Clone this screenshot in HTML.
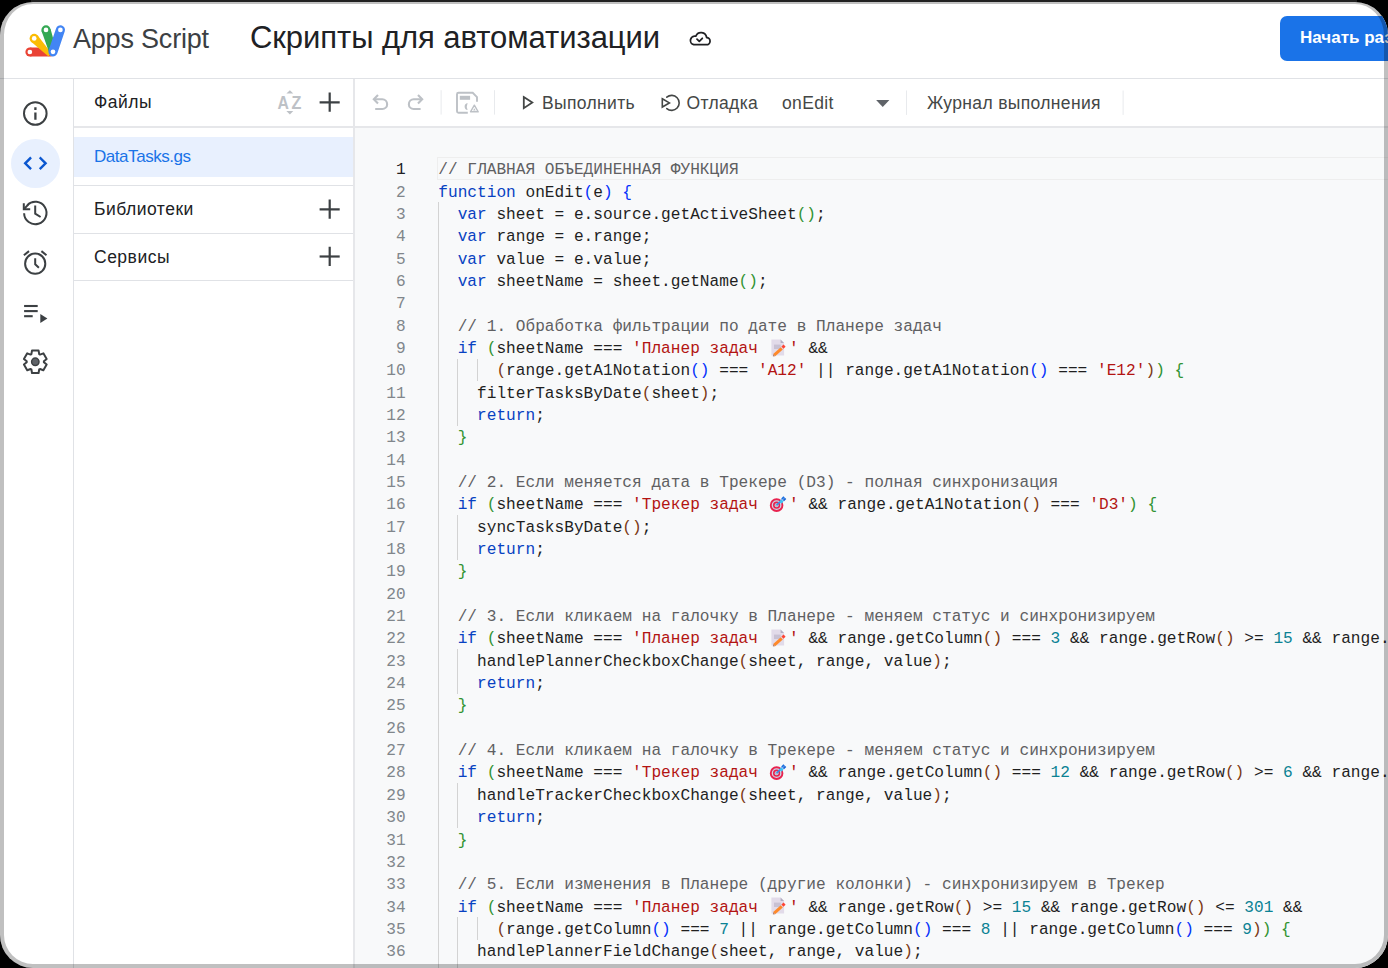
<!DOCTYPE html>
<html><head><meta charset="utf-8">
<style>
*{box-sizing:border-box;margin:0;padding:0}
html,body{width:1388px;height:968px;overflow:hidden;background:#000}
body{position:relative;font-family:"Liberation Sans",sans-serif;color:#202124}
#strip{position:absolute;left:31px;right:31px;top:0;height:2px;background:#212121}
#app{position:absolute;left:0;top:2px;width:1388px;height:966px;border-radius:33px;overflow:hidden;background:#fff}
#frame{position:absolute;left:0;top:2px;width:1388px;height:966px;border-radius:33px;border:4px solid rgba(0,0,0,0.247);border-top-width:2px;pointer-events:none}
.abs{position:absolute;white-space:nowrap}
.hl{position:absolute;height:1px;background:#e0e2e6}
.vl{position:absolute;width:1px;background:#e0e2e6}
#pg{position:absolute;left:0;top:-2px;width:1388px;height:968px}
#icons{position:absolute;left:0;top:0;width:1388px;height:968px}
#apps{left:73px;top:22.8px;font-size:27px;line-height:32px;color:#3c4043;letter-spacing:-0.2px}
#title{left:250px;top:19.6px;font-size:31px;line-height:36px;color:#202124;letter-spacing:-0.05px}
#btn{left:1280px;top:16.4px;width:140px;height:44.5px;border-radius:7px;background:#1a73e8;color:#fff;font-weight:bold;font-size:17px;line-height:20px;padding:11.7px 0 0 20px}
#navsel{left:11px;top:139px;width:49px;height:49px;border-radius:50%;background:#e8f0fe}
.pt{position:absolute;left:94px;font-size:17.5px;line-height:20px;color:#202124;letter-spacing:0.5px;white-space:nowrap}
#filesel{left:74px;top:137px;width:279px;height:40px;background:#e8f0fe}
#fname{left:94px;top:146.6px;font-size:17px;line-height:20px;color:#1a73e8;letter-spacing:-0.45px}
.tb{position:absolute;top:92.7px;font-size:17.5px;line-height:20px;color:#444746;letter-spacing:0.35px;white-space:nowrap}
#editor{position:absolute;left:355px;top:128px;width:1034px;height:845px;background:#f8f9fa}
#curline{position:absolute;left:437px;top:157px;width:960px;height:23px;border:1px solid #eeeeee;border-right:none}
.ig{position:absolute;width:1px;background:#d3d3d3}
#nums{position:absolute;left:354px;top:159.2px;width:51.7px;text-align:right;font-family:"Liberation Mono",monospace;font-size:16.13px;line-height:22.35px;color:#80868b;white-space:pre}
#nums .act{color:#202124}
#code{position:absolute;left:438.3px;top:159.2px;width:1000px;font-family:"Liberation Mono",monospace;font-size:16.158px;line-height:22.35px;color:#1f1f1f;white-space:pre}
#code .l{height:22.35px}
.emo{display:inline-block;width:21.4px;height:18px;vertical-align:-3.6px}
.emo svg{display:block}
.kw{color:#0842c2}
.cm{color:#5f6062}
.st{color:#b31412}
.nu{color:#0b8294}
.b1{color:#0431fa}
.b2{color:#319331}
.b3{color:#7b3814}
</style></head><body>
<div id="strip"></div>
<div id="app"><div id="pg">
  <div class="abs" id="apps">Apps Script</div>
  <div class="abs" id="title">Скрипты для автоматизации</div>
  <div class="abs" id="btn">Начать развертывание</div>
  <div class="hl" style="left:0;top:78px;width:1388px"></div>
  <div class="vl" style="left:73px;top:79px;height:900px"></div>
  <div class="abs" id="navsel"></div>
  <div class="vl" style="left:353px;top:79px;height:900px;width:2px;background:#e6e7ea"></div>
  <div class="pt" style="top:92.4px">Файлы</div>
  <div class="hl" style="left:74px;top:126px;width:1314px;height:2px;background:#e6e7ea"></div>
  <div class="abs" id="filesel"></div>
  <div class="abs" id="fname">DataTasks.gs</div>
  <div class="hl" style="left:74px;top:185px;width:279px"></div>
  <div class="pt" style="top:198.9px">Библиотеки</div>
  <div class="hl" style="left:74px;top:233px;width:279px"></div>
  <div class="pt" style="top:246.5px">Сервисы</div>
  <div class="hl" style="left:74px;top:280px;width:279px"></div>
  <div class="tb" style="left:542px">Выполнить</div>
  <div class="tb" style="left:686.5px">Отладка</div>
  <div class="tb" style="left:782px">onEdit</div>
  <div class="tb" style="left:927px">Журнал выполнения</div>
  <div id="editor"></div>
  <div id="curline"></div>
  <div id="guides"><div class="ig" style="left:438px;top:202.20px;height:782.25px"></div><div class="ig" style="left:457px;top:358.65px;height:67.05px"></div><div class="ig" style="left:457px;top:515.10px;height:44.70px"></div><div class="ig" style="left:457px;top:649.20px;height:44.70px"></div><div class="ig" style="left:457px;top:783.30px;height:44.70px"></div><div class="ig" style="left:457px;top:917.40px;height:67.05px"></div><div class="ig" style="left:477px;top:358.65px;height:22.35px"></div><div class="ig" style="left:477px;top:917.40px;height:22.35px"></div></div><!--/guides-->
  <div id="nums"><div class="l act">1</div><div class="l">2</div><div class="l">3</div><div class="l">4</div><div class="l">5</div><div class="l">6</div><div class="l">7</div><div class="l">8</div><div class="l">9</div><div class="l">10</div><div class="l">11</div><div class="l">12</div><div class="l">13</div><div class="l">14</div><div class="l">15</div><div class="l">16</div><div class="l">17</div><div class="l">18</div><div class="l">19</div><div class="l">20</div><div class="l">21</div><div class="l">22</div><div class="l">23</div><div class="l">24</div><div class="l">25</div><div class="l">26</div><div class="l">27</div><div class="l">28</div><div class="l">29</div><div class="l">30</div><div class="l">31</div><div class="l">32</div><div class="l">33</div><div class="l">34</div><div class="l">35</div><div class="l">36</div><div class="l">37</div></div><!--/nums-->
  <div id="code"><div class="l"><span class="cm">// ГЛАВНАЯ ОБЪЕДИНЕННАЯ ФУНКЦИЯ</span></div><div class="l"><span class="kw">function</span> onEdit<span class="b1">(</span>e<span class="b1">)</span> <span class="b1">{</span></div><div class="l">  <span class="kw">var</span> sheet = e.source.getActiveSheet<span class="b2">()</span>;</div><div class="l">  <span class="kw">var</span> range = e.range;</div><div class="l">  <span class="kw">var</span> value = e.value;</div><div class="l">  <span class="kw">var</span> sheetName = sheet.getName<span class="b2">()</span>;</div><div class="l"></div><div class="l">  <span class="cm">// 1. Обработка фильтрации по дате в Планере задач</span></div><div class="l">  <span class="kw">if</span> <span class="b2">(</span>sheetName === <span class="st">'Планер задач </span><span class="emo"><svg width="21.4" height="18" viewBox="0 0 21.4 18"><path d="M3.4 0.6H12.6L16.1 4.1V16.4H3.4Z" fill="#e2dbe9"/><path d="M12.6 0.6L16.1 4.1H12.6Z" fill="#b3adbf"/><rect x="6" y="5.6" width="6.7" height="4.4" fill="#c8c1d3"/><path d="M5.2 15.08L12.8 8.28L14.8 10.52L7.2 17.32Z" fill="#ff8a2a"/><path d="M5.2 15.08L7.2 17.32L4.9 17.6Z" fill="#b9826c"/><path d="M13.4 7.48L15.6 5.48L17.6 7.72L15.4 9.72Z" fill="#ff4433"/></svg></span><span class="st">'</span> &amp;&amp;</div><div class="l">      <span class="b3">(</span>range.getA1Notation<span class="b1">()</span> === <span class="st">'A12'</span> || range.getA1Notation<span class="b1">()</span> === <span class="st">'E12'</span><span class="b3">)</span><span class="b2">)</span> <span class="b2">{</span></div><div class="l">    filterTasksByDate<span class="b3">(</span>sheet<span class="b3">)</span>;</div><div class="l">    <span class="kw">return</span>;</div><div class="l">  <span class="b2">}</span></div><div class="l"></div><div class="l">  <span class="cm">// 2. Если меняется дата в Трекере (D3) - полная синхронизация</span></div><div class="l">  <span class="kw">if</span> <span class="b2">(</span>sheetName === <span class="st">'Трекер задач </span><span class="emo"><svg width="21.4" height="18" viewBox="0 0 21.4 18"><circle cx="8.6" cy="10.15" r="5.85" fill="#cdd5e6" stroke="#e8234f" stroke-width="1.9"/><circle cx="8.6" cy="10.15" r="2.8" fill="#c9d3e3" stroke="#e8234f" stroke-width="1.6"/><circle cx="8.6" cy="10.15" r="1.6" fill="#b3bfcf"/><path d="M8.6 10.15L14 4.7" stroke="#3a8fe8" stroke-width="1.6"/><path d="M11.2 6.6L13.4 4.4L15.6 6.6L13.4 8.8Z" fill="#40c4f5"/><path d="M13.2 3.4L15.4 1.2L16.8 2.6L14.6 4.8Z" fill="#1a6fe0"/><path d="M14.7 4.9L16.9 2.7L18.3 4.1L16.1 6.3Z" fill="#1565d8"/></svg></span><span class="st">'</span> &amp;&amp; range.getA1Notation<span class="b3">()</span> === <span class="st">'D3'</span><span class="b2">)</span> <span class="b2">{</span></div><div class="l">    syncTasksByDate<span class="b3">()</span>;</div><div class="l">    <span class="kw">return</span>;</div><div class="l">  <span class="b2">}</span></div><div class="l"></div><div class="l">  <span class="cm">// 3. Если кликаем на галочку в Планере - меняем статус и синхронизируем</span></div><div class="l">  <span class="kw">if</span> <span class="b2">(</span>sheetName === <span class="st">'Планер задач </span><span class="emo"><svg width="21.4" height="18" viewBox="0 0 21.4 18"><path d="M3.4 0.6H12.6L16.1 4.1V16.4H3.4Z" fill="#e2dbe9"/><path d="M12.6 0.6L16.1 4.1H12.6Z" fill="#b3adbf"/><rect x="6" y="5.6" width="6.7" height="4.4" fill="#c8c1d3"/><path d="M5.2 15.08L12.8 8.28L14.8 10.52L7.2 17.32Z" fill="#ff8a2a"/><path d="M5.2 15.08L7.2 17.32L4.9 17.6Z" fill="#b9826c"/><path d="M13.4 7.48L15.6 5.48L17.6 7.72L15.4 9.72Z" fill="#ff4433"/></svg></span><span class="st">'</span> &amp;&amp; range.getColumn<span class="b3">()</span> === <span class="nu">3</span> &amp;&amp; range.getRow<span class="b3">()</span> &gt;= <span class="nu">15</span> &amp;&amp; range.</div><div class="l">    handlePlannerCheckboxChange<span class="b3">(</span>sheet, range, value<span class="b3">)</span>;</div><div class="l">    <span class="kw">return</span>;</div><div class="l">  <span class="b2">}</span></div><div class="l"></div><div class="l">  <span class="cm">// 4. Если кликаем на галочку в Трекере - меняем статус и синхронизируем</span></div><div class="l">  <span class="kw">if</span> <span class="b2">(</span>sheetName === <span class="st">'Трекер задач </span><span class="emo"><svg width="21.4" height="18" viewBox="0 0 21.4 18"><circle cx="8.6" cy="10.15" r="5.85" fill="#cdd5e6" stroke="#e8234f" stroke-width="1.9"/><circle cx="8.6" cy="10.15" r="2.8" fill="#c9d3e3" stroke="#e8234f" stroke-width="1.6"/><circle cx="8.6" cy="10.15" r="1.6" fill="#b3bfcf"/><path d="M8.6 10.15L14 4.7" stroke="#3a8fe8" stroke-width="1.6"/><path d="M11.2 6.6L13.4 4.4L15.6 6.6L13.4 8.8Z" fill="#40c4f5"/><path d="M13.2 3.4L15.4 1.2L16.8 2.6L14.6 4.8Z" fill="#1a6fe0"/><path d="M14.7 4.9L16.9 2.7L18.3 4.1L16.1 6.3Z" fill="#1565d8"/></svg></span><span class="st">'</span> &amp;&amp; range.getColumn<span class="b3">()</span> === <span class="nu">12</span> &amp;&amp; range.getRow<span class="b3">()</span> &gt;= <span class="nu">6</span> &amp;&amp; range.</div><div class="l">    handleTrackerCheckboxChange<span class="b3">(</span>sheet, range, value<span class="b3">)</span>;</div><div class="l">    <span class="kw">return</span>;</div><div class="l">  <span class="b2">}</span></div><div class="l"></div><div class="l">  <span class="cm">// 5. Если изменения в Планере (другие колонки) - синхронизируем в Трекер</span></div><div class="l">  <span class="kw">if</span> <span class="b2">(</span>sheetName === <span class="st">'Планер задач </span><span class="emo"><svg width="21.4" height="18" viewBox="0 0 21.4 18"><path d="M3.4 0.6H12.6L16.1 4.1V16.4H3.4Z" fill="#e2dbe9"/><path d="M12.6 0.6L16.1 4.1H12.6Z" fill="#b3adbf"/><rect x="6" y="5.6" width="6.7" height="4.4" fill="#c8c1d3"/><path d="M5.2 15.08L12.8 8.28L14.8 10.52L7.2 17.32Z" fill="#ff8a2a"/><path d="M5.2 15.08L7.2 17.32L4.9 17.6Z" fill="#b9826c"/><path d="M13.4 7.48L15.6 5.48L17.6 7.72L15.4 9.72Z" fill="#ff4433"/></svg></span><span class="st">'</span> &amp;&amp; range.getRow<span class="b3">()</span> &gt;= <span class="nu">15</span> &amp;&amp; range.getRow<span class="b3">()</span> &lt;= <span class="nu">301</span> &amp;&amp;</div><div class="l">      <span class="b3">(</span>range.getColumn<span class="b1">()</span> === <span class="nu">7</span> || range.getColumn<span class="b1">()</span> === <span class="nu">8</span> || range.getColumn<span class="b1">()</span> === <span class="nu">9</span><span class="b3">)</span><span class="b2">)</span> <span class="b2">{</span></div><div class="l">    handlePlannerFieldChange<span class="b3">(</span>sheet, range, value<span class="b3">)</span>;</div><div class="l">    <span class="kw">return</span>;</div></div><!--/code-->
<svg id="icons" width="1388" height="968" viewBox="0 0 1388 968">
<!-- logo -->
<g>
  <circle cx="29.85" cy="52" r="4.45" fill="#ea4335"/>
  <path d="M29.85 47.55 L38.5 47.55 L52 56.45 L29.85 56.45Z" fill="#ea4335"/>
  <circle cx="34.2" cy="38.4" r="4.6" fill="#fbbc04"/>
  <path d="M30.87 41.57 L37.53 35.23 L51 52.8 L48.5 56.4Z" fill="#fbbc04"/>
  <circle cx="46" cy="29.9" r="4.6" fill="#34a853"/>
  <path d="M41.45 30.7 L50.55 29.1 L55 45 L50.5 56.2Z" fill="#34a853"/>
  <line x1="60.4" y1="29.9" x2="53" y2="51.8" stroke="#4285f4" stroke-width="9.2" stroke-linecap="round"/>
  <circle cx="29.85" cy="52" r="2.35" fill="#fff"/>
  <circle cx="34.2" cy="38.4" r="2.35" fill="#fff"/>
  <circle cx="46" cy="29.9" r="2.35" fill="#fff"/>
  <circle cx="60.4" cy="29.9" r="2.35" fill="#fff"/>
  <circle cx="53" cy="51.8" r="2.35" fill="#fff"/>
</g>
<!-- cloud done -->
<g fill="none" stroke="#202124" stroke-width="1.8" stroke-linejoin="round" stroke-linecap="round">
  <path d="M693.8 44.7 H706.3 A3.6 3.6 0 0 0 706.6 37.5 A5.6 5.6 0 0 0 695.8 36.2 A4.3 4.3 0 0 0 693.8 44.7Z"/>
  <path d="M697 39.2 L699.3 41.3 L702.3 38.3"/>
</g>
<!-- nav icons -->
<g fill="none" stroke="#3c4043" stroke-width="2">
  <circle cx="35.3" cy="113.5" r="11.3"/>
  <line x1="35.4" y1="112.4" x2="35.4" y2="119.8" stroke-width="2.3"/>
  <line x1="35.4" y1="107.3" x2="35.4" y2="110" stroke-width="2.3"/>
</g>
<g fill="none" stroke="#0b57d0" stroke-width="2.4" stroke-linecap="square" stroke-linejoin="miter">
  <path d="M30.2 158.3 L25.2 163.3 L30.2 168.3"/>
  <path d="M40.6 158.3 L45.6 163.3 L40.6 168.3"/>
</g>
<g fill="none" stroke="#3c4043" stroke-width="2">
  <path d="M24.1 213.2 A11.2 11.2 0 1 0 27.3 205.1"/>
  <path d="M23.8 203.3 V209.3 H30.2"/>
  <path d="M24.3 208.8 L28.2 204.6"/>
  <path d="M35.2 205.6 V213.6 L40.6 217"/>
</g>
<g fill="none" stroke="#3c4043" stroke-width="2">
  <circle cx="35.2" cy="263.7" r="10.1"/>
  <line x1="23.9" y1="255.2" x2="29" y2="251.1"/>
  <line x1="41.4" y1="251.1" x2="46.5" y2="255.2"/>
  <path d="M35.2 258.3 V264.3 L38.9 267.7"/>
</g>
<g fill="none" stroke="#3c4043" stroke-width="2.1">
  <line x1="24.1" y1="306" x2="37.7" y2="306"/>
  <line x1="24.1" y1="311.1" x2="37.7" y2="311.1"/>
  <line x1="24.1" y1="316.2" x2="32.7" y2="316.2"/>
</g>
<path d="M40.3 314 L47.4 318.5 L40.3 323.1Z" fill="#3c4043"/>
<path d="M31.40 354.14 L32.00 350.58 L38.60 350.58 L39.20 354.14 L39.99 354.59 L43.37 353.33 L46.67 359.05 L43.89 361.35 L43.89 362.25 L46.67 364.55 L43.37 370.27 L39.99 369.01 L39.20 369.46 L38.60 373.02 L32.00 373.02 L31.40 369.46 L30.61 369.01 L27.23 370.27 L23.93 364.55 L26.71 362.25 L26.71 361.35 L23.93 359.05 L27.23 353.33 L30.61 354.59Z" fill="none" stroke="#3c4043" stroke-width="2" stroke-linejoin="round"/>
<circle cx="35.3" cy="361.8" r="3.7" fill="#5f6368" stroke="#3c4043" stroke-width="1.5"/>
<!-- files panel icons -->
<g fill="#bdc1c6">
  <path d="M286.4 93.6 L289.9 90.2 L293.3 93.6Z"/>
  <path d="M286.4 110.9 L289.9 114.4 L293.3 110.9Z"/>
</g>
<text x="277.6" y="108.6" font-family="Liberation Sans" font-size="17.5" font-weight="bold" fill="#bdc1c6" textLength="11.4" lengthAdjust="spacingAndGlyphs">A</text><text x="291.6" y="108.6" font-family="Liberation Sans" font-size="17.5" font-weight="bold" fill="#bdc1c6" textLength="9.9" lengthAdjust="spacingAndGlyphs">Z</text>
<g stroke="#3c4043" stroke-width="2.2">
  <line x1="319.6" y1="102.3" x2="339.7" y2="102.3"/>
  <line x1="329.7" y1="92.5" x2="329.7" y2="111.8"/>
  <line x1="319.6" y1="209.3" x2="339.7" y2="209.3"/>
  <line x1="329.7" y1="199.5" x2="329.7" y2="218.8"/>
  <line x1="319.6" y1="256.5" x2="339.7" y2="256.5"/>
  <line x1="329.7" y1="246.7" x2="329.7" y2="266"/>
</g>
<!-- toolbar -->
<g fill="none" stroke="#bdc1c6" stroke-width="2.1">
  <path d="M378 95 L373.8 99.3 L378 103.6"/>
  <path d="M374 99.3 H382.3 A4.85 4.85 0 0 1 382.3 109 H375.2"/>
  <path d="M418 95 L422.2 99.3 L418 103.6"/>
  <path d="M422 99.3 H413.7 A4.85 4.85 0 0 0 413.7 109 H420.6"/>
</g>
<g fill="none" stroke="#bdc1c6" stroke-width="1.9">
  <path d="M467.8 112.7 H458.5 Q457 112.7 457 111.2 V94.3 Q457 92.8 458.5 92.8 H472.7 L477 97.1 V101.7"/>
</g>
<rect x="459.8" y="95.8" width="10.3" height="4" fill="#bdc1c6"/>
<path d="M467.6 102.9 A3.6 3.6 0 0 0 467.6 110 A9 9 0 0 1 467.6 102.9Z" fill="#bdc1c6"/>
<path d="M474.35 104.6 L478.6 111.9 H470.1Z" fill="#fff" stroke="#fff" stroke-width="3" stroke-linejoin="round"/>
<path d="M474.35 105.2 L478.2 111.8 H470.5Z" fill="#fff" stroke="#bdc1c6" stroke-width="1.4" stroke-linejoin="round"/>
<path d="M474.35 108.3 L475.6 110.4 H473.1Z" fill="#bdc1c6"/>
<g fill="#e8eaed">
  <rect x="440.6" y="90.2" width="1" height="24.4"/>
  <rect x="494" y="90.2" width="1" height="24.4"/>
  <rect x="906" y="90.5" width="1" height="24.4"/>
  <rect x="1122.6" y="90.5" width="1" height="24.4"/>
</g>
<path d="M523.8 97.1 L532.3 102.6 L523.8 108.2Z" fill="none" stroke="#444746" stroke-width="1.8" stroke-linejoin="miter"/>
<path d="M662.3 98.8 L669.4 102.9 L662.3 107Z" fill="none" stroke="#444746" stroke-width="1.6"/>
<path d="M666.8 97.2 A7.5 7.5 0 1 1 666.8 108.6" fill="none" stroke="#444746" stroke-width="1.6" stroke-linecap="round"/>
<path d="M876.1 100 H889.4 L882.75 107Z" fill="#5f6368"/>
</svg>
</div></div>
<div id="frame"></div>
</body></html>
